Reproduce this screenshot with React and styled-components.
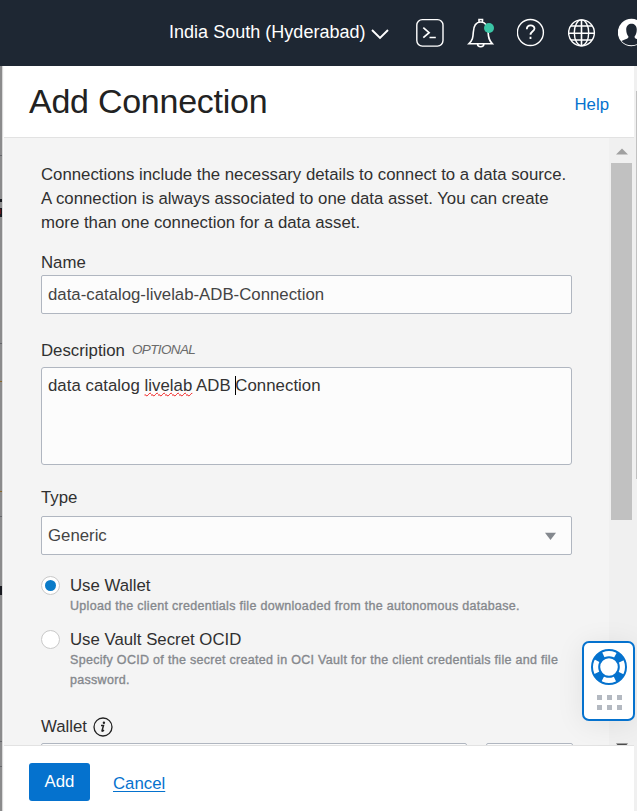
import React from 'react';
import styled, { createGlobalStyle } from 'styled-components';

const GlobalStyle = createGlobalStyle`
  *, *::before, *::after { box-sizing: border-box; }
  body {
    margin: 0;
    font-family: "Liberation Sans", Arial, sans-serif;
    font-size: 16.8px;
    line-height: 24px;
    color: #303030;
    overflow: hidden;
  }
`;

const Page = styled.div`
  width: 637px;
  height: 811px;
  display: flex;
  flex-direction: column;
  overflow: hidden;
`;

const TopBar = styled.header`
  height: 66px;
  flex: none;
  display: flex;
  align-items: center;
  padding-left: 169px;
  background: #1e2733;
  color: #fff;
`;

const Region = styled.div`
  display: flex;
  align-items: center;
  width: 247px;
  flex: none;
  height: 66px;
  padding-bottom: 2px;
  font-size: 18px;
  white-space: nowrap;
  svg { margin: 4px 0 0 5px; }
`;

const RegionName = styled.span`
  width: 197px;
  letter-spacing: 0.02px;
`;

const NavIcons = styled.div`
  display: flex;
  flex: none;
  svg { display: block; flex: none; margin-right: 22px; }
`;

const Workspace = styled.div`
  flex: 1;
  min-height: 0;
  display: flex;
`;

const Backdrop = styled.div`
  width: 3px;
  flex: none;
  background: #8b8b8c;
  border-right: 1px solid #d9d9d9;
  svg { display: block; }
`;

const Panel = styled.main`
  width: 631px;
  flex: none;
  display: flex;
  flex-direction: column;
  background: #fff;
  border-left: 1px solid #fafafa;
`;

const PageEdge = styled.div`
  flex: 1;
  background: #f0f0f0;
  padding: 25px 0 0 2px;
`;

const EdgeThumb = styled.div`
  height: 388px;
  background: #c1c1c1;
`;

const PanelHeader = styled.div`
  height: 72px;
  flex: none;
  display: flex;
  align-items: center;
  justify-content: space-between;
  padding: 0 25px 0 25px;
  border-bottom: 1px solid #e2e2e2;
`;

const Title = styled.h1`
  margin: 0 0 2px;
  font-size: 34px;
  line-height: 42px;
  font-weight: 400;
  letter-spacing: -0.26px;
  color: #222;
  white-space: nowrap;
`;

const HelpLink = styled.a`
  color: #0572ce;
  margin-top: 7px;
`;

const Scroller = styled.div`
  height: 607px;
  flex: none;
  display: flex;
  overflow: hidden;
  background: #f4f4f4;
`;

const Form = styled.div`
  width: 605px;
  flex: none;
  padding: 25px 0 0 37px;
`;

const Intro = styled.p`
  margin: 0 0 15px;
  width: 531px;
  white-space: nowrap;
`;

const IntroLine = styled.span`
  display: block;
`;

const Label = styled.label`
  display: flex;
  align-items: center;
  height: 24px;
  padding-top: 2px;
  margin-bottom: ${(p) => p.$gap}px;
  svg { margin-left: 6px; }
`;

const Optional = styled.em`
  margin: -2px 0 0 7px;
  font-size: 13.5px;
  letter-spacing: -0.62px;
  color: #6b6b6b;
`;

const Field = styled.div`
  display: flex;
  justify-content: space-between;
  align-items: center;
  width: ${(p) => p.$w || 531}px;
  height: 39px;
  margin-bottom: ${(p) => p.$after || 0}px;
  padding: 0 15px 0 6px;
  background: #fcfcfc;
  border: 1px solid #b0b6c0;
  border-radius: 2px;
  color: #444;
`;

const TextBox = styled(Field)`
  display: block;
  height: 98px;
  padding-top: 6px;
  border-radius: 3px;
  white-space: nowrap;
  color: #333;
  letter-spacing: 0.03px;
`;

const Misspelled = styled.span`
  text-decoration: underline wavy #f01818 1px;
  text-underline-offset: 1px;
  text-decoration-skip-ink: none;
`;

const Caret = styled.span`
  display: inline-block;
  width: 1px;
  height: 19px;
  margin-right: -1px;
  vertical-align: -4px;
  background: #000;
`;

const RadioRow = styled.div`
  display: flex;
  gap: 10px;
  margin-bottom: ${(p) => p.$after}px;
`;

const Radio = styled.span`
  width: 19px;
  height: 19px;
  flex: none;
  display: grid;
  place-items: center;
  margin-top: 2px;
  border: 1px solid #c9c9c9;
  border-radius: 50%;
  background: #fff;
  &::after {
    content: "";
    width: 11px;
    height: 11px;
    border-radius: 50%;
    background: ${(p) => (p.$on ? '#0a7bc8' : 'transparent')};
  }
`;

const RadioText = styled.div`
  padding-top: 1px;
  line-height: 22px;
`;

const Hint = styled.div`
  margin-top: -1px;
  font-size: 12.5px;
  line-height: 20px;
  letter-spacing: 0.3px;
  font-weight: 400;
  color: #85888d;
  -webkit-text-stroke: 0.35px #85888d;
  white-space: nowrap;
`;

const UploadRow = styled.div`
  display: flex;
  gap: 19px;
`;

const Track = styled.div`
  flex: 1;
  display: flex;
  flex-direction: column;
  background: #f0f0f0;
  padding: 10px 2px 0;
  svg { display: block; margin: 0 auto; flex: none; }
`;

const Thumb = styled.div`
  height: 357px;
  margin: 8px 0 223px;
  flex: none;
  background: #c1c1c1;
`;

const Footer = styled.footer`
  flex: 1;
  display: flex;
  align-items: flex-start;
  padding: 17px 0 0 25px;
  border-top: 1px solid #e2e2e2;
`;

const AddButton = styled.button`
  width: 61px;
  height: 38px;
  padding: 0;
  border: 0;
  border-radius: 3px;
  background: #0572ce;
  color: #fff;
  font: 16.8px/24px "Liberation Sans", Arial, sans-serif;
`;

const CancelLink = styled.a`
  margin: 9px 0 0 23px;
  color: #0572ce;
  text-decoration: underline;
  text-underline-offset: 2px;
`;

const SupportWidget = styled.div`
  position: fixed;
  left: 582px;
  top: 641px;
  width: 53px;
  height: 80px;
  display: flex;
  flex-direction: column;
  align-items: center;
  padding-top: 6px;
  background: #fff;
  border: 2px solid #0572ce;
  border-radius: 7px;
  box-shadow: 0 3px 28px rgba(0, 0, 0, 0.08);
`;

const Dots = styled.div`
  display: grid;
  grid-template-columns: repeat(3, 5px);
  gap: 5px;
  margin: 10px 0 0 1px;
`;

const Dot = styled.i`
  width: 5px;
  height: 5px;
  background: #b4b9c1;
`;

const TopIcon = ({ children }) => (
  <svg width="28.5" height="30" viewBox="0 0 28.5 30" fill="none" stroke="#fff" strokeWidth="1.4">
    {children}
  </svg>
);

const NavBar = () => (
  <TopBar>
    <Region>
      <RegionName>India South (Hyderabad)</RegionName>
      <svg width="18" height="11" viewBox="0 0 18 11" fill="none" stroke="#fff" strokeWidth="1.9">
        <path d="M1 1l8 8 8-8" />
      </svg>
    </Region>
    <NavIcons>
      <TopIcon>
        <rect x="0.8" y="1.6" width="26.2" height="26.5" rx="5.5" />
        <path d="M7.3 9.7l5.8 5-5.8 5M13.5 19.5h6.3" strokeWidth="1.7" />
      </TopIcon>
      <TopIcon>
        <path d="M1.800 25.800c3.800-3.700 4.200-6.200 4.500-11.500.3-7 2.800-10.300 7.400-10.300s7.100 3.300 7.400 10.300c.3 5.300.8 7.800 4.300 11.500zM12 4V1.500h3.500V4M10.500 25.800c0 4 6.400 4 6.400 0" strokeWidth="1.6" />
        <circle cx="22" cy="10" r="5" fill="#3bc5a6" stroke="none" />
      </TopIcon>
      <TopIcon>
        <circle cx="13.4" cy="14.5" r="13" />
        <path d="M9.800 11.200c.2-5.100 7.700-4.600 7.700-.7 0 2.700-4 2.800-4 6.200M13.500 18.800v2.200" strokeWidth="1.8" />
      </TopIcon>
      <TopIcon>
        <circle cx="13.5" cy="14.8" r="12.9" />
        <ellipse cx="13.500" cy="14.800" rx="7.200" ry="12.900" />
        <path d="M13.500 2v26M3 8h21M.8 15.200h25.500M3 22h21" strokeWidth="1.6" />
      </TopIcon>
      <TopIcon>
        <circle cx="13.500" cy="14.500" r="13" fill="#fff" />
        <path d="M8.200 11.500c0-7.700 10.600-7.700 10.600 0 0 4-1.300 5.500-2.300 7.200 0 2.200 4 2.700 7 4.200-4.500 5.700-15.500 5.700-20 0 3-1.500 7-2 7-4.200-1-1.700-2.300-3.200-2.300-7.200z" fill="#1e2733" stroke="none" />
      </TopIcon>
    </NavIcons>
  </TopBar>
);

const PageBehind = () => (
  <Backdrop>
    <svg width="2" height="745" viewBox="0 0 2 745">
      <g fill="#65666a">
        <rect y="89" width="2" height="1" />
        <rect y="277" width="2" height="1" />
        <rect y="450" width="2" height="1" />
        <rect y="675" width="2" height="1" />
        <rect y="700" width="2" height="1" />
      </g>
      <rect y="315" width="2" height="1" fill="#8a6827" />
      <rect y="425" width="2" height="1" fill="#8a6827" />
      <path d="M0 133h2v3H0zM0 142h2v9H0zM0 520h2v9H0z" fill="#181a20" />
      <path d="M0 143h1v5H0z" fill="#61151c" />
    </svg>
  </Backdrop>
);

const Lifebuoy = () => (
  <svg width="36" height="36" viewBox="0 0 36 36" fill="none">
    <circle cx="18" cy="18" r="13.3" stroke="#0572ce" strokeWidth="8" strokeDasharray="8.5 12.39" strokeDashoffset="-6.2" />
    <circle cx="18" cy="18" r="17" stroke="#0572ce" strokeWidth="2" />
    <circle cx="18" cy="18" r="9.8" stroke="#0572ce" strokeWidth="2" />
  </svg>
);

export default function App() {
  return (
    <Page>
      <GlobalStyle />
      <NavBar />
      <Workspace>
        <PageBehind />
        <Panel>
          <PanelHeader>
            <Title>Add Connection</Title>
            <HelpLink>Help</HelpLink>
          </PanelHeader>
          <Scroller>
            <Form>
              <Intro>
                <IntroLine>Connections include the necessary details to connect to a data source.</IntroLine>
                <IntroLine>A connection is always associated to one data asset. You can create</IntroLine>
                <IntroLine>more than one connection for a data asset.</IntroLine>
              </Intro>
              <Label $gap={1}>Name</Label>
              <Field $after={24}>data-catalog-livelab-ADB-Connection</Field>
              <Label $gap={5}>Description<Optional>OPTIONAL</Optional></Label>
              <TextBox $after={20}>
                data catalog <Misspelled>livelab</Misspelled> ADB <Caret />Connection
              </TextBox>
              <Label $gap={7}>Type</Label>
              <Field $after={19}>
                Generic
                <svg width="11" height="8" viewBox="0 0 11 8"><path d="M0 .8h11L5.5 8z" fill="#84888e" /></svg>
              </Field>
              <RadioRow $after={12}>
                <Radio $on />
                <RadioText>
                  Use Wallet
                  <Hint>Upload the client credentials file downloaded from the autonomous database.</Hint>
                </RadioText>
              </RadioRow>
              <RadioRow $after={24}>
                <Radio />
                <RadioText>
                  Use Vault Secret OCID
                  <Hint>Specify OCID of the secret created in OCI Vault for the client credentials file and file<br />password.</Hint>
                </RadioText>
              </RadioRow>
              <Label $gap={5}>
                Wallet
                <svg width="20" height="20" viewBox="0 0 20 20" fill="none" stroke="#222">
                  <circle cx="10" cy="10" r="9" strokeWidth="1.3" />
                  <path d="M8 8.500h2.500L9 13.800q0 1 2-.6" strokeWidth="1.5" />
                  <circle cx="10.9" cy="5.7" r="1.2" fill="#222" stroke="none" />
                </svg>
              </Label>
              <UploadRow>
                <Field $w={426} />
                <Field $w={87} />
              </UploadRow>
            </Form>
            <Track>
              <svg width="12" height="7" viewBox="0 0 12 7"><path d="M0 6.5L6 .5l6 6z" fill="#a0a0a0" /></svg>
              <Thumb />
              <svg width="12" height="7" viewBox="0 0 12 7"><path d="M0 .5h12L6 6.5z" fill="#4d4d4d" /></svg>
            </Track>
          </Scroller>
          <Footer>
            <AddButton>Add</AddButton>
            <CancelLink>Cancel</CancelLink>
          </Footer>
        </Panel>
        <PageEdge><EdgeThumb /></PageEdge>
      </Workspace>
      <SupportWidget>
        <Lifebuoy />
        <Dots>{[0, 1, 2, 3, 4, 5].map((n) => <Dot key={n} />)}</Dots>
      </SupportWidget>
    </Page>
  );
}
